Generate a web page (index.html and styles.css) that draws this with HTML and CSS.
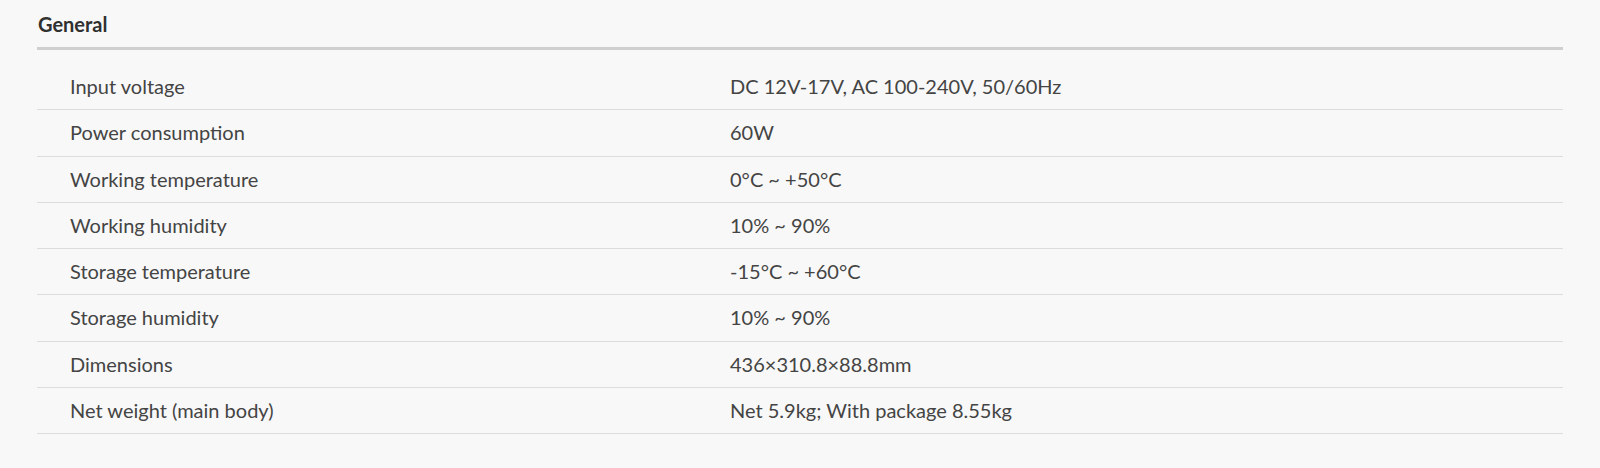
FILE: index.html
```html
<!DOCTYPE html>
<html lang="en">
<head>
<meta charset="utf-8">
<title>General specifications</title>
<link rel="stylesheet" href="styles.css">
</head>
<body>
<section class="spec">
  <h2 class="spec-title">General</h2>
  <div class="spec-table">
    <div class="spec-row"><div class="spec-label">Input voltage</div><div class="spec-value">DC 12V-17V, AC 100-240V, 50/60Hz</div></div>
    <div class="spec-row"><div class="spec-label">Power consumption</div><div class="spec-value">60W</div></div>
    <div class="spec-row"><div class="spec-label">Working temperature</div><div class="spec-value">0°C ~ +50°C</div></div>
    <div class="spec-row"><div class="spec-label">Working humidity</div><div class="spec-value">10% ~ 90%</div></div>
    <div class="spec-row"><div class="spec-label">Storage temperature</div><div class="spec-value">-15°C ~ +60°C</div></div>
    <div class="spec-row"><div class="spec-label">Storage humidity</div><div class="spec-value">10% ~ 90%</div></div>
    <div class="spec-row"><div class="spec-label">Dimensions</div><div class="spec-value">436×310.8×88.8mm</div></div>
    <div class="spec-row"><div class="spec-label">Net weight (main body)</div><div class="spec-value">Net 5.9kg; With package 8.55kg</div></div>
  </div>
</section>
</body>
</html>
```
FILE: styles.css
```css
html, body {
  margin: 0;
  background: #f8f8f8;
}
body {
  font-family: Lato, "Liberation Sans", sans-serif;
  color: #444444;
}
.spec {
  padding: 12px 37px 20px 37px;
}
.spec-title {
  margin: 0;
  padding: 0 0 11px 1px;
  font-size: 20px;
  line-height: 24px;
  font-weight: 700;
  color: #303030;
  border-bottom: 3px solid #cfcfcf;
}
.spec-table {
  margin-top: 14px;
  display: flex;
  flex-direction: column;
}
.spec-row {
  display: grid;
  grid-template-columns: 693px 1fr;
  padding: 10px 0;
  border-bottom: 1px solid #dcdcdc;
  font-size: 20px;
  line-height: 25.25px;
}
.spec-label {
  padding-left: 33px;
}
```
